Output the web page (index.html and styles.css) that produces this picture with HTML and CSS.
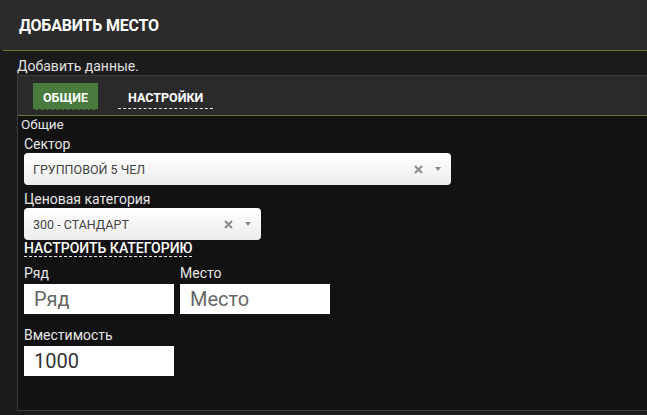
FILE: index.html
```html
<!DOCTYPE html>
<html lang="ru">
<head>
<meta charset="utf-8">
<title>Добавить место</title>
<link rel="stylesheet" href="styles.css">
</head>
<body>
<header class="header"><h1 class="title">ДОБАВИТЬ МЕСТО</h1></header>
<div class="divider"></div>
<p class="intro">Добавить данные.</p>
<section class="panel">
  <nav class="tabs">
    <a class="tab tab-active">ОБЩИЕ</a>
    <a class="tab">НАСТРОЙКИ</a>
  </nav>
  <div class="content">
    <div class="section-title">Общие</div>
    <div class="form">
      <div class="field">
        <label class="label">Сектор</label>
        <div class="select select-wide">
          <span class="select-value">ГРУППОВОЙ 5 ЧЕЛ</span>
          <span class="select-icons">
            <svg class="clear" width="9" height="9" viewBox="0 0 9 9"><path d="M1 1L8 8M8 1L1 8" stroke="#8a8a8a" stroke-width="2"/></svg>
            <svg class="caret" width="6" height="4" viewBox="0 0 6 4"><path d="M0 0H6L3 4Z" fill="#8a8a8a"/></svg>
          </span>
        </div>
      </div>
      <div class="field field-gap">
        <label class="label">Ценовая категория</label>
        <div class="select select-narrow">
          <span class="select-value">300 - СТАНДАРТ</span>
          <span class="select-icons">
            <svg class="clear" width="9" height="9" viewBox="0 0 9 9"><path d="M1 1L8 8M8 1L1 8" stroke="#8a8a8a" stroke-width="2"/></svg>
            <svg class="caret" width="6" height="4" viewBox="0 0 6 4"><path d="M0 0H6L3 4Z" fill="#8a8a8a"/></svg>
          </span>
        </div>
      </div>
      <a class="config-link">НАСТРОИТЬ КАТЕГОРИЮ</a>
      <div class="row">
        <div class="field">
          <label class="label label-sm">Ряд</label>
          <input class="input" type="text" placeholder="Ряд">
        </div>
        <div class="field">
          <label class="label label-sm">Место</label>
          <input class="input" type="text" placeholder="Место">
        </div>
      </div>
      <div class="field field-cap">
        <label class="label label-sm">Вместимость</label>
        <input class="input" type="text" value="1000">
      </div>
    </div>
  </div>
</section>
</body>
</html>
```
FILE: styles.css
```css
* { box-sizing: border-box; }
html, body { margin: 0; padding: 0; }
body {
  background: #1b1b1b;
  font-family: Roboto, "Noto Sans", sans-serif;
  color: #e6e6e6;
  width: 647px;
  height: 415px;
  overflow: hidden;
}
.header {
  height: 50px;
  background: #2b2b2b;
  padding-left: 19px;
}
.title {
  margin: 0;
  font-size: 16px;
  font-weight: 700;
  line-height: 52px;
  color: #fff;
  letter-spacing: -0.2px;
}
.divider {
  height: 1px;
  margin-left: 3px;
  background: #5f7d32;
}
.intro {
  margin: 0;
  height: 24px;
  padding-left: 17px;
  font-size: 14px;
  line-height: 30px;
  color: #e0e0e0;
}
.panel {
  margin-left: 17px;
  height: 336px;
  border: 1px solid #3c3c3c;
  border-right: none;
  background: #121212;
  display: flex;
  flex-direction: column;
}
.tabs {
  height: 40px;
  background: #2a2a2a;
  border-bottom: 1px solid #5f7d32;
  display: flex;
  align-items: flex-start;
  gap: 20px;
  padding: 7px 0 0 15px;
}
.tab {
  height: 27px;
  padding: 0 10px;
  font-size: 12.5px;
  font-weight: 700;
  line-height: 29px;
  color: #fff;
  border-bottom: 1px dashed #e8e8e8;
}
.tab-active {
  background: #497b3f;
  border-bottom-color: #2c3a28;
  width: 65px;
  padding: 0;
  text-align: center;
}
.tabs .tab:not(.tab-active) {
  height: 26px;
}
.content {
  flex: 1;
  background: #121212;
}
.section-title {
  padding-left: 3px;
  font-size: 13.5px;
  line-height: 16px;
  height: 19px;
  color: #e6e6e6;
}
.form {
  padding-left: 6px;
  display: flex;
  flex-direction: column;
  align-items: flex-start;
}
.field {
  display: flex;
  flex-direction: column;
  align-items: flex-start;
}
.field-gap { margin-top: 5px; }
.label {
  font-size: 14px;
  line-height: 18px;
  color: #e6e6e6;
}
.label-sm {
  font-size: 14px;
  margin-bottom: 2px;
}
.select {
  height: 32px;
  border-radius: 4px;
  background: linear-gradient(#ffffff, #f4f4f4 60%, #ececec);
  display: flex;
  align-items: center;
  justify-content: space-between;
  padding: 0 10px 0 9px;
}
.select-wide { width: 427px; }
.select-narrow { width: 237px; }
.select-value {
  font-family: Roboto, Arial, sans-serif;
  font-size: 12.5px;
  color: #444;
  padding-top: 1px;
}
.select-icons {
  display: flex;
  align-items: center;
  gap: 12px;
}
.config-link {
  margin-top: 0;
  font-size: 14px;
  font-weight: 500;
  line-height: 16px;
  color: #fff;
  border-bottom: 1px dashed #e8e8e8;
  margin-bottom: 7px;
}
.row {
  display: flex;
  gap: 6px;
}
.input {
  width: 150px;
  height: 30px;
  border: none;
  margin: 0;
  padding: 0 10px;
  background: #fff;
  font-family: Roboto, Arial, sans-serif;
  font-size: 20px;
  color: #333;
  outline: none;
}
.input::placeholder { color: #666; }
.field-cap { margin-top: 12px; }
```
